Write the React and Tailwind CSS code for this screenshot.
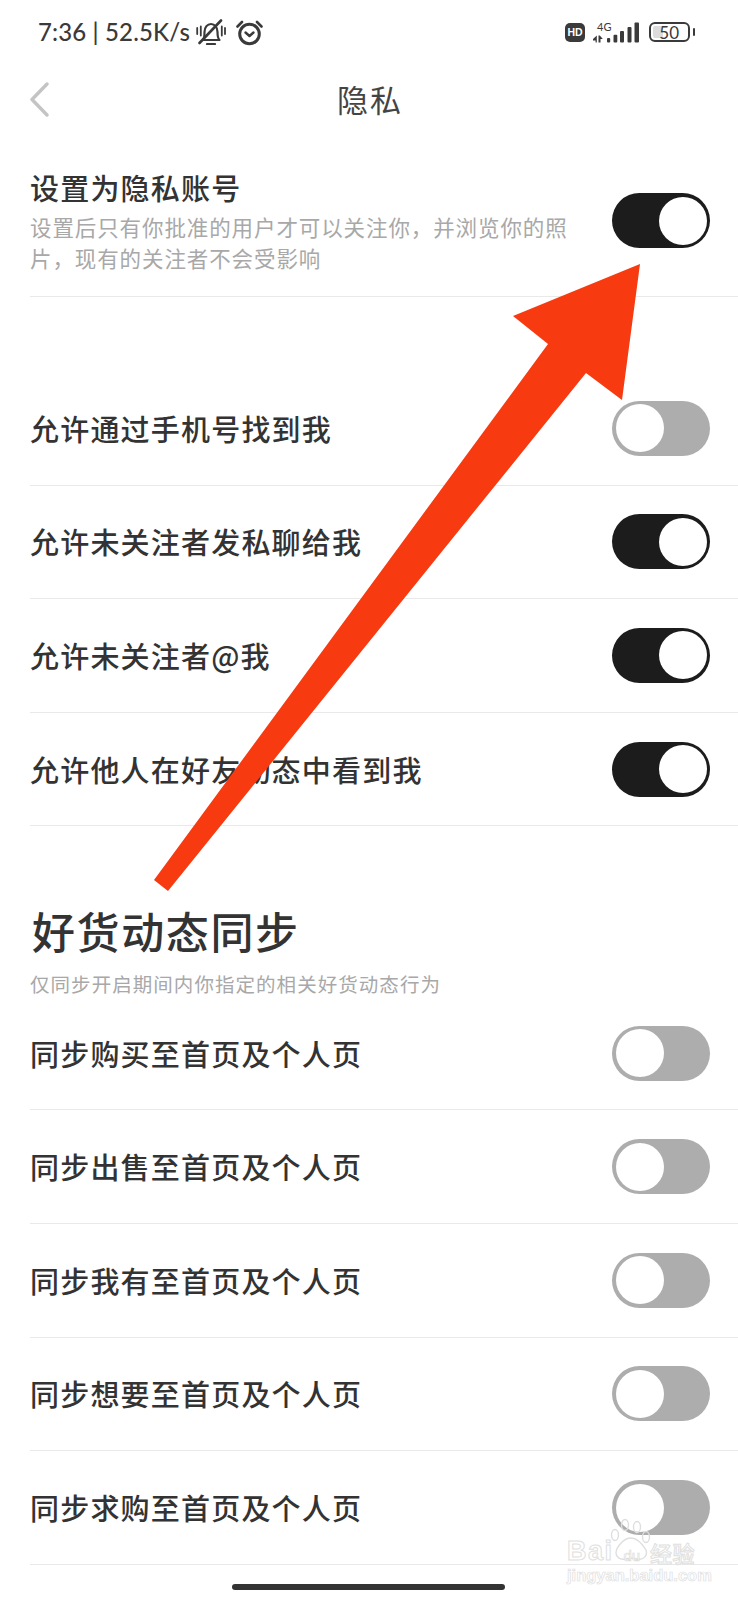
const font = { fontFamily: '"Noto Sans CJK SC", sans-serif' };

function Toggle({ on }) {
  return (
    <div className={`flex h-[55px] w-[98px] shrink-0 items-center rounded-full ${on ? "justify-end bg-[#1c1c1c] pr-[3px]" : "justify-start bg-[#adadad] pl-[4px]"}`}>
      <div className="h-[48px] w-[48px] rounded-full bg-white" />
    </div>
  );
}

function Row({ label, on }) {
  return (
    <div className="ml-[30px] flex h-[113.6px] items-center justify-between border-b border-[#e9e9e9] pr-[28px]">
      <span className="text-[29px] font-medium leading-none tracking-[1.2px] text-[#333333]">{label}</span>
      <Toggle on={on} />
    </div>
  );
}

function StatusBar() {
  return (
    <div className="flex h-[64px] items-center justify-between pl-[38px] pr-[43px] text-[#3a3a3a]">
      <div className="flex items-center">
        <span className="w-[152px] whitespace-nowrap font-['Lato'] text-[24px] font-medium leading-none tracking-[0.15px]">7:36 | 52.5K/s</span>
        <svg width="30" height="26" viewBox="0 0 30 26" fill="none" stroke="#3a3a3a" strokeWidth="2.2" strokeLinecap="round" strokeLinejoin="round" className="ml-[6px]">
          <path d="M7 21c1.5-1.5 1.5-4 1.5-8 0-5 3-8 6.5-8s6.5 3 6.5 8c0 4 .5 6.500 2 8z" />
          <path d="M11 25h8" />
          <path d="M3.500 24 25 1.500" strokeWidth="2.600" />
          <path d="M1.200 9v6M4.800 7.500v9M25.800 7.500v9M29 9v6" strokeWidth="1.800" />
        </svg>
        <svg width="27" height="26" viewBox="0 0 27 26" fill="none" stroke="#3a3a3a" strokeWidth="3" strokeLinecap="round" strokeLinejoin="round" className="ml-[10px] mt-[1px]">
          <circle cx="13.500" cy="14" r="9.800" />
          <path d="M9.500 12.500l4 3.500 4-3.500" strokeWidth="2.400" />
          <path d="M1.500 6.500 6 2M25.500 6.500 21 2" strokeWidth="2.600" />
        </svg>
      </div>
      <div className="flex items-center">
        <div className="flex h-[19px] w-[20px] items-center justify-center rounded-[5px] bg-[#3a3a3a] font-['Liberation_Sans'] text-[10.5px] font-bold leading-none text-white">HD</div>
        <div className="relative ml-[8px] h-[22px] w-[47px]">
          <span className="absolute left-[4px] top-[0px] font-['Lato'] text-[11px] leading-none">4G</span>
          <svg width="47" height="22" viewBox="0 0 47 22" className="absolute left-0 top-0" fill="#3a3a3a">
            <path d="M0 18 3.800 14.500V21.500H2.600V19.500H0zM5.500 14.500h1.300l3 3.500H7.500v3.500h-2z" />
            <rect x="14" y="17" width="3.200" height="4.500" rx="1" />
            <rect x="20.500" y="13.700" width="3.800" height="7.800" rx="1" />
            <rect x="27" y="10" width="4" height="11.500" rx="1" />
            <rect x="34.500" y="6" width="4" height="15.500" rx="1" />
            <rect x="41.500" y="1.500" width="4.500" height="20" rx="1" />
          </svg>
        </div>
        <div className="ml-[9px] flex items-center">
          <div className="relative flex h-[20px] w-[41px] items-center justify-end overflow-hidden rounded-[6px] border-2 border-[#3a3a3a] pr-[9px] font-['Lato'] text-[17px] leading-none">
            <div className="absolute inset-y-[2px] left-[2px] w-[10px] rounded-[2px] bg-[#dcdcdc]" />
            <span className="relative">50</span>
          </div>
          <div className="ml-[3px] h-[8px] w-[2px] rounded-[1px] bg-[#3a3a3a]" />
        </div>
      </div>
    </div>
  );
}

const first = [
  ["允许通过手机号找到我", false],
  ["允许未关注者发私聊给我", true],
  ["允许未关注者@我", true],
  ["允许他人在好友动态中看到我", true],
];
const second = [
  "同步购买至首页及个人页",
  "同步出售至首页及个人页",
  "同步我有至首页及个人页",
  "同步想要至首页及个人页",
  "同步求购至首页及个人页",
];

export default function App() {
  return (
    <div style={font} className="relative h-[1600px] w-[738px] overflow-hidden bg-white">
      <StatusBar />
      <div className="relative flex h-[72px] items-center justify-center pb-[4px] pl-[2px]">
        <svg width="24" height="36" viewBox="0 0 24 36" fill="none" stroke="#c4c4c4" strokeWidth="3.400" strokeLinecap="round" strokeLinejoin="round" className="absolute left-[29px] top-[18px]">
          <path d="M18 2 3 17.500 18 33" />
        </svg>
        <span className="text-[31px] leading-none tracking-[2px] text-[#444444]">隐私</span>
      </div>

      <div className="ml-[30px] flex h-[161px] items-start justify-between border-b border-[#e9e9e9] pr-[28px]">
        <div className="mt-[36.5px] w-[540px]">
          <div className="text-[29px] font-medium leading-none tracking-[1.2px] text-[#333333]">设置为隐私账号</div>
          <div className="mt-[10.5px] text-[21.5px] leading-[30.6px] tracking-[0.9px] text-[#a8a8a8]">
            设置后只有你批准的用户才可以关注你，并浏览你的照片，现有的关注者不会受影响
          </div>
        </div>
        <div className="mt-[57px]">
          <Toggle on />
        </div>
      </div>

      <div className="h-[75px]" />

      {first.map(([label, on]) => (
        <Row key={label} label={label} on={on} />
      ))}

      <div className="ml-[30px] flex h-[170.5px] flex-col">
        <div className="mt-[77px] pl-[2px] text-[43px] font-medium leading-[54px] tracking-[1.6px] text-[#333333]">好货动态同步</div>
        <div className="mt-[15px] text-[19.5px] leading-[24px] tracking-[1.05px] text-[#a8a8a8]">仅同步开启期间内你指定的相关好货动态行为</div>
      </div>

      {second.map((label) => (
        <Row key={label} label={label} on={false} />
      ))}

      <div className="ml-[232px] mt-[19.500px] h-[6px] w-[273px] rounded-full bg-[#333333]" />

      <svg width="738" height="1600" viewBox="0 0 738 1600" className="pointer-events-none absolute left-0 top-0">
        <polygon points="640,264 622,400 586,373 168,891 154,880 548,344 513,316" fill="#f83a10" />
      </svg>

      <svg width="44" height="46" viewBox="0 0 44 46" fill="none" stroke="#dedede" strokeWidth="1.400" className="pointer-events-none absolute left-[610px] top-[1517px]">
        <ellipse cx="5" cy="18" rx="3.500" ry="5.500" />
        <ellipse cx="15" cy="8" rx="3.500" ry="5.500" />
        <ellipse cx="27" cy="10" rx="3.500" ry="5.500" />
        <ellipse cx="36" cy="20" rx="3.500" ry="5.500" />
        <path d="M6 36c0-6 8-15 15-15s12 7 15 12c2 6-3 10-8 9-4-1-9-1-13 0-5 1-9-2-9-6z" />
      </svg>
      <div className="pointer-events-none absolute left-[567px] top-[1538px] flex w-[128px] items-center justify-between font-['Liberation_Sans'] text-[27px] font-bold leading-none text-white [-webkit-text-stroke:1px_#e0e0e0]">
        <span className="tracking-[1.5px]">Bai</span>
        <span className="mt-[7px] text-[15px] font-normal [-webkit-text-stroke:0.6px_#d8d8d8]">du</span>
        <span style={font} className="text-[22px] font-medium tracking-[0.5px]">经验</span>
      </div>
      <div className="pointer-events-none absolute left-[567px] top-[1567px] font-['Liberation_Sans'] text-[16.500px] font-bold leading-none text-white [-webkit-text-stroke:0.7px_#e0e0e0]">
        jingyan.baidu.com
      </div>
    </div>
  );
}
